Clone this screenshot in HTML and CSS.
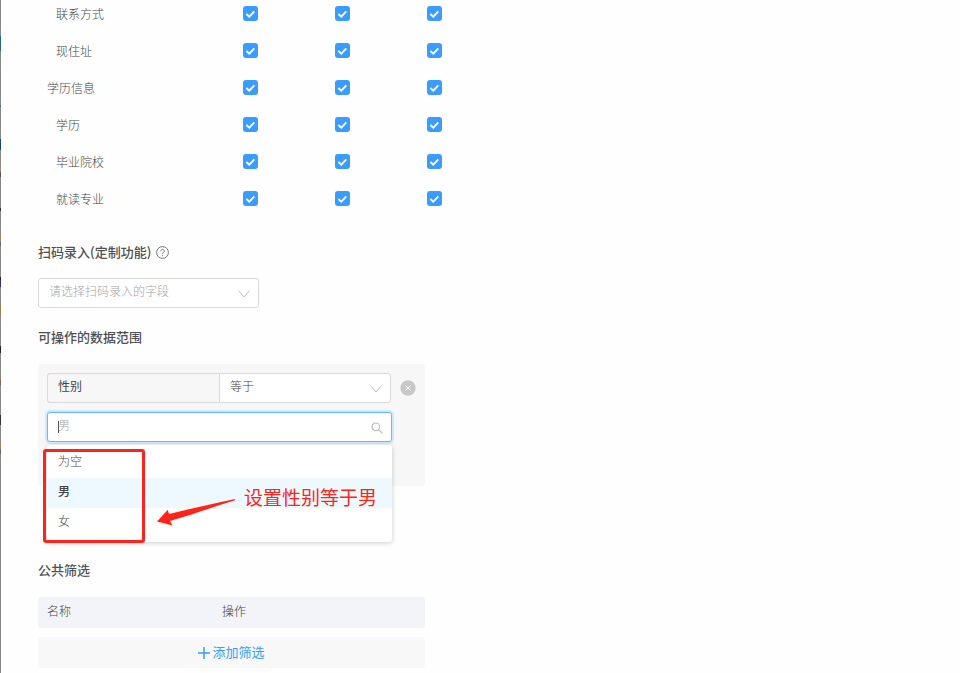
FILE: index.html
```html
<!DOCTYPE html>
<html lang="zh-CN">
<head>
    <meta charset="UTF-8">
    <meta name="viewport" content="width=device-width, initial-scale=1.0">
    <title>字段权限</title>
    <link rel="stylesheet" href="styles.css">
</head>
<body>
    <main class="drawer">
        <table class="perm-table">
            <tbody>
                <tr>
                    <th scope="row" class="child">联系方式</th>
                    <td><input type="checkbox" aria-label="联系方式 可见" checked></td>
                    <td><input type="checkbox" aria-label="联系方式 可编辑" checked></td>
                    <td><input type="checkbox" aria-label="联系方式 必填" checked></td>
                </tr>
                <tr>
                    <th scope="row" class="child">现住址</th>
                    <td><input type="checkbox" aria-label="现住址 可见" checked></td>
                    <td><input type="checkbox" aria-label="现住址 可编辑" checked></td>
                    <td><input type="checkbox" aria-label="现住址 必填" checked></td>
                </tr>
                <tr>
                    <th scope="row">学历信息</th>
                    <td><input type="checkbox" aria-label="学历信息 可见" checked></td>
                    <td><input type="checkbox" aria-label="学历信息 可编辑" checked></td>
                    <td><input type="checkbox" aria-label="学历信息 必填" checked></td>
                </tr>
                <tr>
                    <th scope="row" class="child">学历</th>
                    <td><input type="checkbox" aria-label="学历 可见" checked></td>
                    <td><input type="checkbox" aria-label="学历 可编辑" checked></td>
                    <td><input type="checkbox" aria-label="学历 必填" checked></td>
                </tr>
                <tr>
                    <th scope="row" class="child">毕业院校</th>
                    <td><input type="checkbox" aria-label="毕业院校 可见" checked></td>
                    <td><input type="checkbox" aria-label="毕业院校 可编辑" checked></td>
                    <td><input type="checkbox" aria-label="毕业院校 必填" checked></td>
                </tr>
                <tr>
                    <th scope="row" class="child">就读专业</th>
                    <td><input type="checkbox" aria-label="就读专业 可见" checked></td>
                    <td><input type="checkbox" aria-label="就读专业 可编辑" checked></td>
                    <td><input type="checkbox" aria-label="就读专业 必填" checked></td>
                </tr>
            </tbody>
        </table>

        <section class="section scan">
            <h2 class="title">
                <label for="scanField">扫码录入(定制功能)</label>
                <svg class="help" viewBox="0 0 13 13" aria-hidden="true">
                    <circle cx="6.5" cy="6.5" r="5.9"/>
                    <path d="M4.7 5.1a1.8 1.8 0 1 1 2.7 1.6c-.6.35-.9.6-.9 1.2v.3M6.5 9.1v1"/>
                </svg>
            </h2>
            <div class="select-box">
                <select id="scanField" class="field empty">
                    <option>请选择扫码录入的字段</option>
                </select>
                <svg class="arrow" viewBox="0 0 12 8" aria-hidden="true"><path d="M1 1l5 6 5-6"/></svg>
            </div>
        </section>

        <section class="section range">
            <h2 class="title">可操作的数据范围</h2>
            <div class="range-box">
                <div class="condition">
                    <div class="condition-fields">
                        <input class="field name" type="text" value="性别" aria-label="字段" readonly>
                        <div class="select-box">
                            <select class="field" aria-label="条件">
                                <option>等于</option>
                            </select>
                            <svg class="arrow" viewBox="0 0 12 8" aria-hidden="true"><path d="M1 1l5 6 5-6"/></svg>
                        </div>
                    </div>
                    <button class="remove" type="button" aria-label="删除">
                        <svg viewBox="0 0 16 16" aria-hidden="true">
                            <circle cx="8" cy="8" r="7.7"/>
                            <path d="M5.6 5.6l4.8 4.8M10.4 5.6l-4.8 4.8"/>
                        </svg>
                    </button>
                </div>
                <div class="picker">
                    <input class="field search" type="text" placeholder="男" aria-label="值">
                    <span class="caret"></span>
                    <svg class="glass" viewBox="0 0 12 12" aria-hidden="true">
                        <circle cx="4.8" cy="4.8" r="3.8"/>
                        <path d="M7.6 7.6l3.8 3.8"/>
                    </svg>
                    <ul class="menu" role="listbox" aria-label="值">
                        <li role="option">为空</li>
                        <li role="option" class="selected" aria-selected="true">男</li>
                        <li role="option">女</li>
                    </ul>
                    <div class="mark-box"></div>
                    <svg class="mark-arrow" viewBox="0 0 80 30" aria-hidden="true">
                        <path d="M0 22.5L10.8 10.8L12 15C34 9.5 56 4.5 77 .2Q79 0 78 1.2C56 8 36 15.5 13 22L15.5 26.5Z"/>
                    </svg>
                    <span class="mark-text">设置性别等于男</span>
                </div>
            </div>
        </section>

        <section class="section filter">
            <h2 class="title">公共筛选</h2>
            <table class="filter-table">
                <thead>
                    <tr><th>名称</th><th>操作</th></tr>
                </thead>
            </table>
            <button class="add" type="button">
                <svg viewBox="0 0 12 12" aria-hidden="true"><path d="M6 0v12M0 6h12"/></svg>
                <span>添加筛选</span>
            </button>
        </section>
    </main>
</body>
</html>
```
FILE: styles.css
```css
* {
    box-sizing: border-box;
}

body {
    margin: 0;
    background-color: #fefefe;
    color: #444;
    font-family: "Noto Sans CJK SC", sans-serif;
    font-size: 12px;
    overflow-x: hidden;
}

input, select, button {
    font-family: inherit;
    font-size: inherit;
    color: inherit;
}

.drawer {
    position: relative;
    display: flow-root;
    min-height: 100vh;
    padding-left: 38px;
}

/* sliver of the dimmed page behind the drawer */
.drawer::before {
    content: "";
    position: absolute;
    top: 0;
    bottom: 0;
    left: 0;
    width: 1px;
    background: linear-gradient(#888 36px, #2a6596 36px 51px, #888 51px 105px, #3b7096 105px 107px,
        #888 107px 139px, #10496f 139px 150px, #888 150px 167px, #a08a6a 167px 172px, #555 172px 177px,
        #888 177px 208px, #333 208px 211px, #888 211px 236px, #9a8466 236px 242px, #666 242px 246px,
        #888 246px 277px, #222 277px 280px, #35356e 280px 287px, #888 287px 305px, #9a8050 305px 315px,
        #888 315px 346px, #222 346px 353px, #888 353px 375px, #9a8466 375px 380px, #765 380px 385px,
        #888 385px 415px, #333 415px 425px, #888 425px 444px, #9a8466 444px 449px, #666 449px 454px, #888 454px);
}

.perm-table {
    /* list is scrolled a little past its first row */
    margin-top: -5px;
    width: 442px;
    max-width: 100%;
    table-layout: fixed;
    border-collapse: collapse;
}

.perm-table th {
    width: 166px;
    height: 37px;
    padding: 0 0 0 9px;
    font-weight: 300;
    text-align: left;
}

.perm-table .child {
    padding-left: 18px;
}

.perm-table td {
    padding: 0;
    text-align: center;
}

.perm-table input {
    appearance: none;
    display: block;
    width: 15px;
    height: 15px;
    margin: 0 auto;
    border-radius: 3px;
    background: #3a9cff url("data:image/svg+xml,%3Csvg xmlns='http://www.w3.org/2000/svg' viewBox='0 0 15 15'%3E%3Cpath d='M3.4 8l2.9 2.7 5-5.3' fill='none' stroke='%23fff' stroke-width='1.8'/%3E%3C/svg%3E");
}

.title {
    display: flex;
    align-items: center;
    gap: 5px;
    margin: 0 0 17px;
    font-size: 13px;
    font-weight: 500;
    line-height: 20px;
    color: #505050;
}

.help {
    width: 13px;
    height: 13px;
    fill: none;
    stroke: #777;
}

.section {
    width: 387px;
    max-width: 100%;
}

.scan {
    margin-top: 25px;
}

.scan .title {
    margin-bottom: 16px;
}

.scan .select-box {
    width: 221px;
}

.range {
    margin-top: 19px;
}

.filter {
    margin-top: 74px;
}

.field {
    appearance: none;
    display: block;
    width: 100%;
    height: 30px;
    padding: 0 10px 5px;
    border: 1px solid #d9d9d9;
    border-radius: 3px;
    background-color: #fff;
    font-weight: 300;
    outline: none;
}

.empty {
    color: #a5a5a5;
}

.select-box {
    position: relative;
}

.arrow {
    position: absolute;
    top: 12px;
    right: 9px;
    width: 12px;
    height: 8px;
    fill: none;
    stroke: #bbb;
    pointer-events: none;
}

.range-box {
    height: 122px;
    padding: 9px;
    border-radius: 3px;
    background-color: #f7f7f7;
}

.condition {
    display: flex;
    align-items: center;
    gap: 9px;
}

.condition-fields {
    display: flex;
    flex: 1;
}

.condition-fields .name {
    width: 50%;
    border-right: 0;
    border-radius: 3px 0 0 3px;
    background-color: #f7f7f7;
    font-weight: 400;
}

.condition-fields .select-box {
    width: 50%;
}

.condition-fields select {
    border-radius: 0 3px 3px 0;
}

.remove {
    width: 16px;
    height: 16px;
    padding: 0;
    border: 0;
    background: none;
}

.remove svg {
    display: block;
    fill: #c8c8c8;
    stroke: none;
}

.remove path {
    stroke: #f7f7f7;
}

.picker {
    position: relative;
    margin: 9px 24px 0 0;
}

.search {
    border-color: #6cb6ff;
    box-shadow: 0 0 0 2px #cfe7ff;
}

.search::placeholder {
    color: #a5a5a5;
    opacity: 1;
}

.caret {
    position: absolute;
    top: 9px;
    left: 11px;
    width: 1px;
    height: 12px;
    background-color: #555;
}

.glass {
    position: absolute;
    top: 10px;
    right: 9px;
    width: 12px;
    height: 12px;
    fill: none;
    stroke: #bbb;
    stroke-width: 1.2;
}

.menu {
    position: absolute;
    top: 33px;
    left: 0;
    right: 0;
    margin: 0;
    padding: 3px 0 4px;
    border-radius: 3px;
    background-color: #fff;
    box-shadow: 0 1px 5px rgba(0, 0, 0, 0.2);
    list-style: none;
}

.menu li {
    height: 30px;
    padding: 0 11px;
    font-weight: 300;
    line-height: 26px;
}

.menu .selected {
    background-color: #edf8ff;
    font-weight: 500;
}

/* red notes on top of the form */
.mark-box {
    position: absolute;
    top: 37px;
    left: -4px;
    width: 102px;
    height: 94px;
    border: 3px solid #ff2419;
    border-radius: 3px;
}

.mark-arrow {
    position: absolute;
    top: 87px;
    left: 110px;
    width: 80px;
    height: 30px;
    fill: #ff2419;
}

.mark-text {
    position: absolute;
    top: 71px;
    left: 197px;
    color: #ff2419;
    font-size: 19px;
    font-weight: 400;
    line-height: 28px;
    white-space: nowrap;
}

.filter-table {
    width: 100%;
    table-layout: fixed;
    border-spacing: 0;
    border-radius: 3px;
    background-color: #f3f4f9;
}

.filter-table th {
    height: 31px;
    padding: 0 9px 4px;
    font-weight: 300;
    text-align: left;
}

.filter-table th:first-child {
    width: 175px;
}

.add {
    display: flex;
    align-items: center;
    justify-content: center;
    gap: 2px;
    width: 100%;
    height: 31px;
    margin-top: 9px;
    padding: 0;
    border: 0;
    border-radius: 3px;
    background-color: #f8f8f8;
    color: #3a9cff;
    font-size: 13px;
    font-weight: 400;
}

.add svg {
    width: 12px;
    height: 12px;
    fill: none;
    stroke: #3a9cff;
    stroke-width: 1.5;
}

.add span {
    padding-bottom: 3px;
}
```
